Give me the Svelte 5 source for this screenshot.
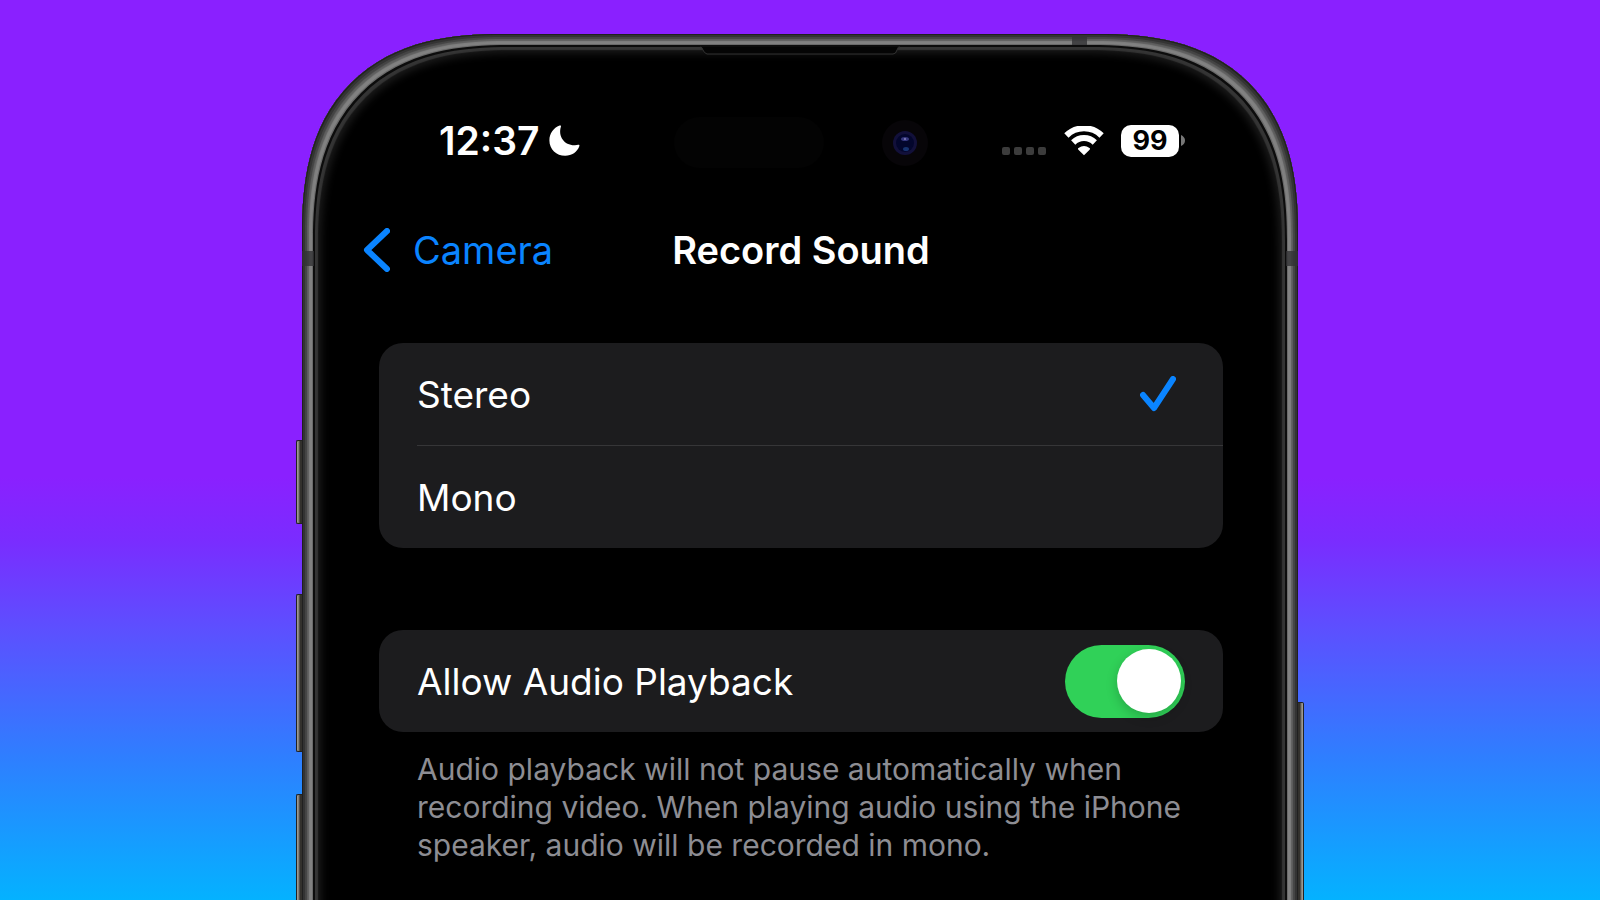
<script>
	const modes = ['Stereo', 'Mono'];
	const signalDots = [0, 1, 2, 3];

	let mode = 'Stereo';
	let allowPlayback = true;
</script>

<main class="backdrop">
	<div class="phone">
		<span class="side-button action"></span>
		<span class="side-button volume-up"></span>
		<span class="side-button volume-down"></span>
		<span class="side-button power"></span>

		<div class="screen">
			<span class="antenna left"></span>
			<span class="antenna right"></span>
			<span class="antenna top"></span>
			<svg class="speaker" width="200" height="9" viewBox="0 0 200 9" aria-hidden="true">
				<path d="M0 1h200q-2 0-3 3t-4 4H7q-3 0-4-4T0 1z" fill="#050505" />
				<path d="M0 1q2 0 3 3t4 4h186q3 0 4-4t3-3" fill="none" stroke="#333" />
			</svg>

			<header class="status">
				<div class="clock">
					<time>12:37</time>
					<svg width="31" height="31" viewBox="0 0 31 31" aria-label="Do Not Disturb">
						<path
							d="M10.600.6C11.600.2 12.300.7 11.900 1.700 8.800 11.500 15.500 20.600 26 20.200c1.200 0 2.300-.3 3.200-.5 1-.2 1.500.4 1.200 1.300C28.300 27 22.800 30.800 16.200 30.800 7.400 30.800.4 24 .4 15.400.4 8.700 4.500 2.900 10.600.6z"
							fill="#fff"
						/>
					</svg>
				</div>

				<div class="island">
					<span class="sensor"></span>
					<svg class="lens" width="46" height="46" viewBox="0 0 46 46" aria-hidden="true">
						<circle cx="23" cy="23" r="23" fill="#070508" />
						<circle cx="23" cy="23" r="12" fill="#12103a" />
						<circle cx="23" cy="23" r="9" fill="#03062c" />
						<ellipse cx="23" cy="19" rx="4" ry="2" fill="#36377e" />
						<circle cx="23" cy="19" r="1" fill="#8684bd" />
						<ellipse cx="24" cy="29" rx="3" ry="2" fill="#17336f" />
					</svg>
				</div>

				<div class="indicators">
					<span class="signal">
						{#each signalDots as dot (dot)}
							<i></i>
						{/each}
					</span>
					<svg class="wifi" width="40" height="30" viewBox="0 0 40 30" aria-label="Wi-Fi">
						<path d="M2.400 9.500a25 25 0 0 1 35.200 0" />
						<path d="M9.200 16.500a15.400 15.400 0 0 1 21.600 0" />
						<path
							d="M20 29.300l-5.600-5.600c-.6-.6-.5-1.200.1-1.600a9 9 0 0 1 11 0c.6.4.7 1 .1 1.600z"
							class="solid"
						/>
					</svg>
					<span class="battery">
						<span class="level">99</span>
						<svg width="4" height="11" viewBox="0 0 4 11" aria-hidden="true">
							<path d="M0 0q4 2 4 5.500T0 11z" fill="#777" />
						</svg>
					</span>
				</div>
			</header>

			<nav>
				<button class="back" type="button">
					<svg width="27" height="44" viewBox="0 0 27 44" aria-hidden="true">
						<path d="M24 3L4 22l20 19" />
					</svg>
					Camera
				</button>
				<h1>Record Sound</h1>
			</nav>

			<div class="settings">
				<div class="card" role="radiogroup" aria-label="Record Sound">
					{#each modes as item (item)}
						<label class="row">
							<span>{item}</span>
							<input type="radio" name="mode" value={item} bind:group={mode} />
							<svg class="check" width="36" height="36" viewBox="0 0 36 36" aria-hidden="true">
								<path d="M3 19l11 13L33 3" />
							</svg>
						</label>
					{/each}
				</div>

				<div>
					<div class="card">
						<label class="row">
							<span>Allow Audio Playback</span>
							<input class="toggle" type="checkbox" bind:checked={allowPlayback} />
						</label>
					</div>
					<p>
						Audio playback will not pause automatically when recording video. When playing audio
						using the iPhone speaker, audio will be recorded in mono.
					</p>
				</div>
			</div>
		</div>
	</div>
</main>

<style>
	:global(body) {
		margin: 0;
		background: #8a20ff;
	}

	.backdrop {
		box-sizing: border-box;
		height: 100vh;
		padding: 34px 16px 0;
		overflow: hidden;
		background: linear-gradient(#8a20ff 53%, #7a2cff 60%, #5c50ff 70%, #2f7eff 84%, #04b2ff 100%);
		color: #fff;
		font-family: Inter, 'Liberation Sans', sans-serif;
		font-size: 37px;
	}

	.phone {
		position: relative;
		max-width: 996px;
		margin: 0 auto;
	}

	.screen {
		position: relative;
		box-sizing: border-box;
		min-height: calc(100vh + 40px);
		padding: 83px 75px 80px 77px;
		border-radius: 172px 172px 0 0;
		background: #000;
		box-shadow:
			inset 0 0 0 1px #202020,
			inset 0 0 0 3px #333,
			inset 0 0 1px 5px #444,
			inset 0 0 1px 7px #606060,
			inset 0 0 0 10px #818181,
			inset 0 0 0 11px #6a6a6a,
			inset 0 0 0 13px #0c0c0c,
			inset 0 0 1px 16px #343434,
			inset 0 0 8px 19px #1c1c1c;
	}

	@supports (corner-shape: squircle) {
		.screen {
			border-radius: 200px 200px 0 0;
			corner-shape: superellipse(1.3);
		}
	}

	.side-button {
		position: absolute;
		left: -6px;
		width: 6px;
		box-sizing: border-box;
		border: 1px solid #222;
		border-right: 0;
		border-radius: 2px 0 0 2px;
		background: linear-gradient(90deg, #aaa69c, #77736b 40%, #33312d 60%);
	}

	.action {
		top: 406px;
		height: 84px;
	}

	.volume-up {
		top: 560px;
		height: 158px;
	}

	.volume-down {
		top: 760px;
		height: 158px;
	}

	.power {
		top: 668px;
		right: -6px;
		left: auto;
		height: 250px;
		transform: scaleX(-1);
	}

	.antenna {
		position: absolute;
		top: 217px;
		width: 12px;
		height: 15px;
		background: rgba(50, 50, 52, 0.8);
	}

	.antenna.left {
		left: 0;
	}

	.antenna.right {
		right: 0;
	}

	.antenna.top {
		top: 3px;
		right: 211px;
		width: 15px;
		height: 8px;
	}

	.speaker {
		position: absolute;
		top: 12px;
		left: calc(50% - 100px);
	}

	.status {
		display: grid;
		grid-template-columns: 1fr 254px 1fr;
		align-items: center;
		height: 51px;
		padding: 0 38px;
	}

	.clock {
		display: flex;
		align-items: center;
		gap: 9px;
		padding: 0 0 4px 22px;
		font-size: 39px;
		font-weight: 600;
	}

	.island {
		display: flex;
		align-items: center;
		justify-content: space-between;
	}

	.sensor {
		width: 150px;
		height: 51px;
		border-radius: 26px;
		background: #030303;
	}

	.indicators {
		display: flex;
		align-items: center;
		justify-content: flex-end;
		padding-bottom: 4px;
	}

	.signal {
		display: flex;
		gap: 4px;
		margin: 20px 18px 0 0;
	}

	.signal i {
		width: 8px;
		height: 8px;
		border-radius: 2px;
		background: #3c3c3c;
	}

	.wifi path {
		fill: none;
		stroke: #fff;
		stroke-width: 6;
	}

	.wifi .solid {
		fill: #fff;
		stroke: none;
	}

	.battery {
		display: flex;
		align-items: center;
		gap: 2px;
		margin-left: 17px;
	}

	.level {
		width: 58px;
		border-radius: 10px;
		background: #fff;
		color: #000;
		font-size: 27px;
		font-weight: 700;
		line-height: 32px;
		text-align: center;
	}

	nav {
		display: grid;
		grid-template-columns: 1fr auto 1fr;
		align-items: center;
		height: 60px;
		margin: 52px -16px 63px;
	}

	.back {
		display: flex;
		align-items: center;
		gap: 23px;
		padding: 0;
		border: 0;
		background: none;
		color: #0a84ff;
		font: inherit;
		font-size: 38px;
		cursor: pointer;
	}

	.back path,
	.check path {
		fill: none;
		stroke: #0a84ff;
		stroke-width: 6;
		stroke-linecap: round;
		stroke-linejoin: round;
	}

	h1 {
		margin: 0;
		font-size: 38px;
		font-weight: 600;
	}

	.settings {
		display: grid;
		gap: 82px;
	}

	.card {
		overflow: hidden;
		border-radius: 24px;
		background: #1c1c1e;
	}

	.row {
		display: flex;
		align-items: center;
		justify-content: space-between;
		height: 102px;
		margin-left: 38px;
		padding-right: 38px;
		cursor: pointer;
	}

	.row + .row {
		border-top: 1px solid #363638;
	}

	.row input {
		appearance: none;
		margin: 0;
		cursor: pointer;
	}

	.check {
		margin-right: 9px;
		visibility: hidden;
	}

	input:checked + .check {
		visibility: visible;
	}

	.row input[type='radio'] {
		margin-left: auto;
	}

	.toggle {
		display: flex;
		align-items: center;
		box-sizing: border-box;
		width: 120px;
		height: 73px;
		padding: 0 4px;
		border-radius: 37px;
		background: #39393d;
	}

	.toggle::before {
		width: 64px;
		height: 64px;
		border-radius: 50%;
		background: #fff;
		box-shadow: 0 4px 12px rgba(0, 0, 0, 0.2);
		content: '';
	}

	.toggle:checked {
		justify-content: flex-end;
		background: #30d158;
	}

	p {
		margin: 18px 38px 0;
		color: #8d8d93;
		font-size: 30px;
		line-height: 38px;
	}
</style>
